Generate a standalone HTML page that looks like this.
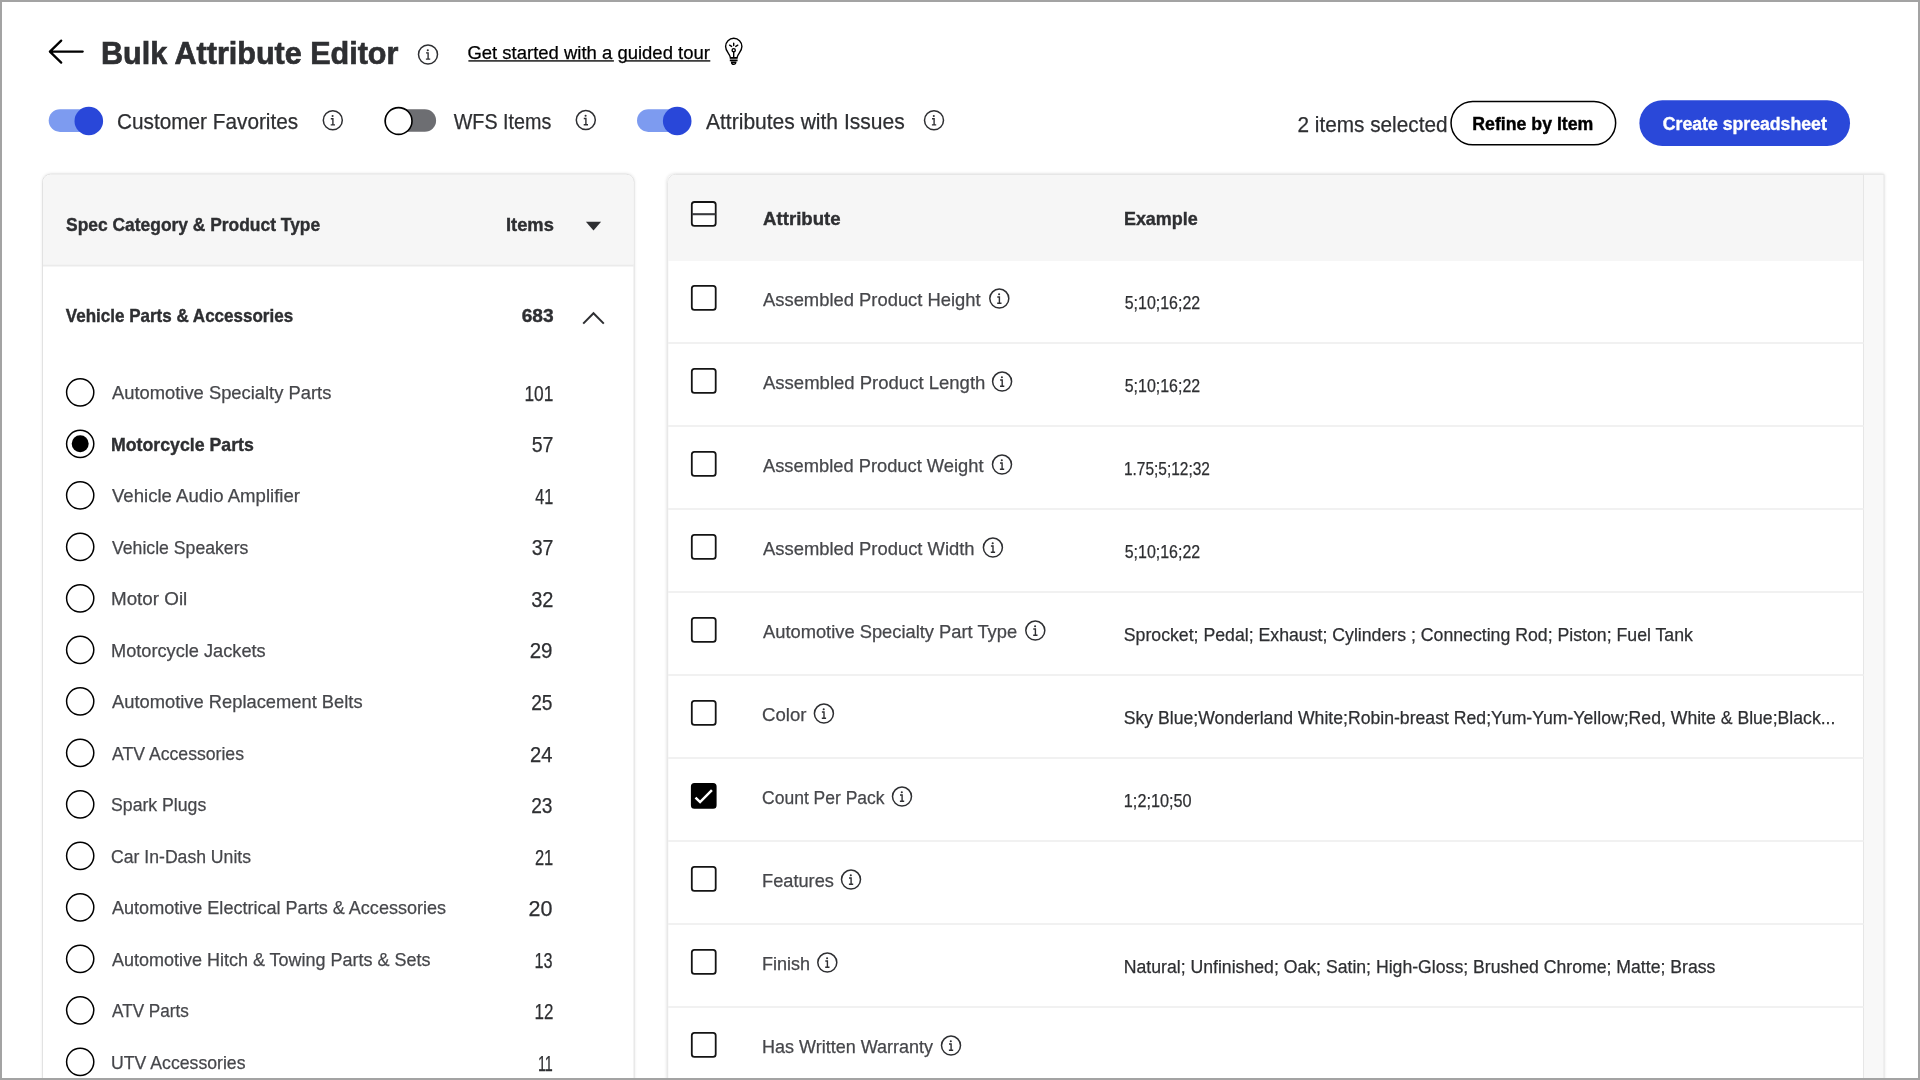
<!DOCTYPE html>
<html><head><meta charset="utf-8"><title>Bulk Attribute Editor</title>
<style>
html,body{margin:0;padding:0;background:#fff;overflow:hidden}
.page{position:relative;width:1920px;height:1080px;overflow:hidden;background:#fff}
svg{position:absolute;left:0;top:0;display:block;will-change:transform;font-family:"Liberation Sans",sans-serif}
.sh{position:absolute;height:1000px;border-radius:8px;box-shadow:0 0 3.5px rgba(0,0,0,.16)}
.frame{position:absolute;left:0;top:0;width:1920px;height:1080px;box-sizing:border-box;border:2px solid #a3a3a3;pointer-events:none}
</style></head><body><div class="page">
<div class="sh" style="left:42.5px;top:174.2px;width:591.6px"></div>
<div class="sh" style="left:667.2px;top:173.9px;width:1217.1px;border-radius:8px 0 0 8px"></div>
<svg width="1920" height="1080" viewBox="0 0 1920 1080">
<path d="M82.7 51.6H50M61.2 40.6L49.9 51.6L61.2 62.6" stroke="#000" stroke-width="2.3" fill="none" stroke-linecap="round" stroke-linejoin="round"/><g stroke="#2e2f32" fill="none" stroke-width="1.5"><circle cx="428.00" cy="54.50" r="9.5"/><path d="M426.00 52.90H428.10V59.10M425.90 59.10H430.20" stroke-width="1.4"/></g><circle cx="427.80" cy="50.20" r="1.05" fill="#2e2f32"/><rect x="468.4" y="60.1" width="145.5" height="1.6" fill="#2a2a2a"/><rect x="626.0" y="60.1" width="84.3" height="1.6" fill="#2a2a2a"/><g fill="none" stroke="#000" stroke-width="1.4"><path d="M730.4 57.6C730.1 53.8 725.6 51.6 725.6 46.4A8.15 8.15 0 0 1 741.9 46.4C741.9 51.6 737.4 53.8 737.1 57.6Z"/><circle cx="733.7" cy="50.2" r="1.6"/><path d="M733.7 51.8V57.6"/><path d="M733.7 43.3V45.6M729.6 45.2L731.6 46.4M737.8 45.2L735.8 46.4" stroke-linecap="round"/><path d="M729.8 58.9H737.6M729.8 60.6H737.6" stroke-width="1.2"/><path d="M731.6 62.2A2.1 2.1 0 1 0 735.8 62.2Z" stroke-width="1.4"/></g><rect x="48.7" y="109.3" width="52" height="22.6" rx="11.3" fill="#7d9bf0"/><circle cx="88.8" cy="121.0" r="14.3" fill="#2947d9"/><g stroke="#2e2f32" fill="none" stroke-width="1.5"><circle cx="332.80" cy="120.30" r="9.5"/><path d="M330.80 118.70H332.90V124.90M330.70 124.90H335.00" stroke-width="1.4"/></g><circle cx="332.60" cy="116.00" r="1.05" fill="#2e2f32"/><rect x="384.5" y="109.2" width="51.6" height="22.6" rx="11.3" fill="#6d6e72"/><circle cx="398.6" cy="121.0" r="13.4" fill="#fff" stroke="#000" stroke-width="1.6"/><g stroke="#2e2f32" fill="none" stroke-width="1.5"><circle cx="585.80" cy="120.10" r="9.5"/><path d="M583.80 118.50H585.90V124.70M583.70 124.70H588.00" stroke-width="1.4"/></g><circle cx="585.60" cy="115.80" r="1.05" fill="#2e2f32"/><rect x="637.0" y="109.3" width="52" height="22.6" rx="11.3" fill="#7d9bf0"/><circle cx="677.2" cy="121.0" r="14.3" fill="#2947d9"/><g stroke="#2e2f32" fill="none" stroke-width="1.5"><circle cx="934.00" cy="120.30" r="9.5"/><path d="M932.00 118.70H934.10V124.90M931.90 124.90H936.20" stroke-width="1.4"/></g><circle cx="933.80" cy="116.00" r="1.05" fill="#2e2f32"/><rect x="1451.05" y="101.45" width="164.6" height="43.3" rx="21.65" fill="#fff" stroke="#000" stroke-width="1.5"/><rect x="1639.4" y="100.25" width="210.6" height="45.75" rx="22.9" fill="#2a48d9"/><g><rect x="42.5" y="174.2" width="591.6" height="1000" rx="8" fill="#fff" stroke="#e2e2e2" stroke-width="1"/><path d="M43 264.5V182.2A8 8 0 0 1 51 174.7H625.6A8 8 0 0 1 633.6 182.2V264.5Z" fill="#f6f6f6"/><rect x="43" y="264.5" width="590.6" height="2" fill="#ebebeb"/></g><path d="M585.9 221.7H601.1L593.5 230.6Z" fill="#2e2f32"/><path d="M583.2 323.6L593.5 313.2L603.8 323.6" stroke="#2e2f32" stroke-width="2" fill="none"/><circle cx="80.2" cy="392.30" r="13.6" fill="#fff" stroke="#000" stroke-width="1.5"/><circle cx="80.2" cy="443.80" r="13.6" fill="#fff" stroke="#000" stroke-width="1.5"/><circle cx="80.2" cy="443.80" r="8.5" fill="#000"/><circle cx="80.2" cy="495.30" r="13.6" fill="#fff" stroke="#000" stroke-width="1.5"/><circle cx="80.2" cy="546.80" r="13.6" fill="#fff" stroke="#000" stroke-width="1.5"/><circle cx="80.2" cy="598.30" r="13.6" fill="#fff" stroke="#000" stroke-width="1.5"/><circle cx="80.2" cy="649.80" r="13.6" fill="#fff" stroke="#000" stroke-width="1.5"/><circle cx="80.2" cy="701.30" r="13.6" fill="#fff" stroke="#000" stroke-width="1.5"/><circle cx="80.2" cy="752.80" r="13.6" fill="#fff" stroke="#000" stroke-width="1.5"/><circle cx="80.2" cy="804.30" r="13.6" fill="#fff" stroke="#000" stroke-width="1.5"/><circle cx="80.2" cy="855.80" r="13.6" fill="#fff" stroke="#000" stroke-width="1.5"/><circle cx="80.2" cy="907.30" r="13.6" fill="#fff" stroke="#000" stroke-width="1.5"/><circle cx="80.2" cy="958.80" r="13.6" fill="#fff" stroke="#000" stroke-width="1.5"/><circle cx="80.2" cy="1010.30" r="13.6" fill="#fff" stroke="#000" stroke-width="1.5"/><circle cx="80.2" cy="1061.80" r="13.6" fill="#fff" stroke="#000" stroke-width="1.5"/><g><path d="M667.7 1100V182.4A8 8 0 0 1 675.7 174.4H1883.8V1100Z" fill="#fff" stroke="#e3e3e3" stroke-width="1"/><path d="M668.2 261V182.4A7.5 7.5 0 0 1 675.7 174.9H1863.5V261Z" fill="#f6f6f6"/><rect x="1863.5" y="174.9" width="19.8" height="906" fill="#f8f8f8"/><rect x="1863" y="174.9" width="1" height="906" fill="#e6e6e6"/></g><rect x="691.80" y="202.00" width="23.9" height="23.9" rx="2.6" fill="#fff" stroke="#141414" stroke-width="1.8"/><path d="M691.90 214.20H715.60" stroke="#3a3b3f" stroke-width="2.1"/><rect x="668" y="342" width="1195.5" height="2" fill="#f1f1f1"/><rect x="691.80" y="285.90" width="23.9" height="23.9" rx="2.6" fill="#fff" stroke="#141414" stroke-width="1.8"/><rect x="668" y="425" width="1195.5" height="2" fill="#f1f1f1"/><rect x="691.80" y="368.90" width="23.9" height="23.9" rx="2.6" fill="#fff" stroke="#141414" stroke-width="1.8"/><rect x="668" y="508" width="1195.5" height="2" fill="#f1f1f1"/><rect x="691.80" y="451.90" width="23.9" height="23.9" rx="2.6" fill="#fff" stroke="#141414" stroke-width="1.8"/><rect x="668" y="591" width="1195.5" height="2" fill="#f1f1f1"/><rect x="691.80" y="534.90" width="23.9" height="23.9" rx="2.6" fill="#fff" stroke="#141414" stroke-width="1.8"/><rect x="668" y="674" width="1195.5" height="2" fill="#f1f1f1"/><rect x="691.80" y="617.90" width="23.9" height="23.9" rx="2.6" fill="#fff" stroke="#141414" stroke-width="1.8"/><rect x="668" y="757" width="1195.5" height="2" fill="#f1f1f1"/><rect x="691.80" y="700.90" width="23.9" height="23.9" rx="2.6" fill="#fff" stroke="#141414" stroke-width="1.8"/><rect x="668" y="840" width="1195.5" height="2" fill="#f1f1f1"/><rect x="691.80" y="783.90" width="23.9" height="23.9" rx="2.6" fill="#000" stroke="#000" stroke-width="1.8"/><path d="M695.50 797.60L700.10 802.10L711.90 790.10" stroke="#fff" stroke-width="2.5" fill="none"/><rect x="668" y="923" width="1195.5" height="2" fill="#f1f1f1"/><rect x="691.80" y="866.90" width="23.9" height="23.9" rx="2.6" fill="#fff" stroke="#141414" stroke-width="1.8"/><rect x="668" y="1006" width="1195.5" height="2" fill="#f1f1f1"/><rect x="691.80" y="949.90" width="23.9" height="23.9" rx="2.6" fill="#fff" stroke="#141414" stroke-width="1.8"/><rect x="668" y="1089" width="1195.5" height="2" fill="#f1f1f1"/><rect x="691.80" y="1032.90" width="23.9" height="23.9" rx="2.6" fill="#fff" stroke="#141414" stroke-width="1.8"/><g stroke="#2e2f32" fill="none" stroke-width="1.5"><circle cx="999.30" cy="298.60" r="9.5"/><path d="M997.30 297.00H999.40V303.20M997.20 303.20H1001.50" stroke-width="1.4"/></g><circle cx="999.10" cy="294.30" r="1.05" fill="#2e2f32"/><g stroke="#2e2f32" fill="none" stroke-width="1.5"><circle cx="1002.10" cy="381.60" r="9.5"/><path d="M1000.10 380.00H1002.20V386.20M1000.00 386.20H1004.30" stroke-width="1.4"/></g><circle cx="1001.90" cy="377.30" r="1.05" fill="#2e2f32"/><g stroke="#2e2f32" fill="none" stroke-width="1.5"><circle cx="1002.00" cy="464.60" r="9.5"/><path d="M1000.00 463.00H1002.10V469.20M999.90 469.20H1004.20" stroke-width="1.4"/></g><circle cx="1001.80" cy="460.30" r="1.05" fill="#2e2f32"/><g stroke="#2e2f32" fill="none" stroke-width="1.5"><circle cx="992.90" cy="547.60" r="9.5"/><path d="M990.90 546.00H993.00V552.20M990.80 552.20H995.10" stroke-width="1.4"/></g><circle cx="992.70" cy="543.30" r="1.05" fill="#2e2f32"/><g stroke="#2e2f32" fill="none" stroke-width="1.5"><circle cx="1035.30" cy="630.60" r="9.5"/><path d="M1033.30 629.00H1035.40V635.20M1033.20 635.20H1037.50" stroke-width="1.4"/></g><circle cx="1035.10" cy="626.30" r="1.05" fill="#2e2f32"/><g stroke="#2e2f32" fill="none" stroke-width="1.5"><circle cx="823.90" cy="713.60" r="9.5"/><path d="M821.90 712.00H824.00V718.20M821.80 718.20H826.10" stroke-width="1.4"/></g><circle cx="823.70" cy="709.30" r="1.05" fill="#2e2f32"/><g stroke="#2e2f32" fill="none" stroke-width="1.5"><circle cx="902.00" cy="796.60" r="9.5"/><path d="M900.00 795.00H902.10V801.20M899.90 801.20H904.20" stroke-width="1.4"/></g><circle cx="901.80" cy="792.30" r="1.05" fill="#2e2f32"/><g stroke="#2e2f32" fill="none" stroke-width="1.5"><circle cx="851.00" cy="879.60" r="9.5"/><path d="M849.00 878.00H851.10V884.20M848.90 884.20H853.20" stroke-width="1.4"/></g><circle cx="850.80" cy="875.30" r="1.05" fill="#2e2f32"/><g stroke="#2e2f32" fill="none" stroke-width="1.5"><circle cx="827.30" cy="962.60" r="9.5"/><path d="M825.30 961.00H827.40V967.20M825.20 967.20H829.50" stroke-width="1.4"/></g><circle cx="827.10" cy="958.30" r="1.05" fill="#2e2f32"/><g stroke="#2e2f32" fill="none" stroke-width="1.5"><circle cx="951.00" cy="1045.60" r="9.5"/><path d="M949.00 1044.00H951.10V1050.20M948.90 1050.20H953.20" stroke-width="1.4"/></g><circle cx="950.80" cy="1041.30" r="1.05" fill="#2e2f32"/>
<text x="101.05" y="64.25" font-size="31.977" font-weight="700" fill="#2e2f32" stroke="#2e2f32" stroke-width="0.7" textLength="297.27" lengthAdjust="spacingAndGlyphs">Bulk Attribute Editor</text>
<text x="467.42" y="59.00" font-size="18.896" font-weight="400" fill="#000" stroke="#000" stroke-width="0.25" textLength="242.51" lengthAdjust="spacingAndGlyphs">Get started with a guided tour</text>
<text x="117.05" y="129.20" font-size="21.803" font-weight="400" fill="#2e2f32" stroke="#2e2f32" stroke-width="0.25" textLength="181.12" lengthAdjust="spacingAndGlyphs">Customer Favorites</text>
<text x="453.75" y="128.90" font-size="21.803" font-weight="400" fill="#2e2f32" stroke="#2e2f32" stroke-width="0.25" textLength="97.56" lengthAdjust="spacingAndGlyphs">WFS Items</text>
<text x="706.00" y="129.00" font-size="21.803" font-weight="400" fill="#2e2f32" stroke="#2e2f32" stroke-width="0.25" textLength="198.65" lengthAdjust="spacingAndGlyphs">Attributes with Issues</text>
<text x="1297.53" y="131.80" font-size="21.367" font-weight="400" fill="#2e2f32" stroke="#2e2f32" stroke-width="0.25" textLength="150.01" lengthAdjust="spacingAndGlyphs">2 items selected</text>
<text x="1472.32" y="130.00" font-size="18.024" font-weight="700" fill="#000" stroke="#000" stroke-width="0.4" textLength="121.02" lengthAdjust="spacingAndGlyphs">Refine by Item</text>
<text x="1662.75" y="130.25" font-size="18.532" font-weight="700" fill="#fff" stroke="#fff" stroke-width="0.4" textLength="164.03" lengthAdjust="spacingAndGlyphs">Create spreadsheet</text>
<text x="66.10" y="230.60" font-size="18.896" font-weight="700" fill="#2e2f32" stroke="#2e2f32" stroke-width="0.4" textLength="254.06" lengthAdjust="spacingAndGlyphs">Spec Category &amp; Product Type</text>
<text x="506.01" y="230.80" font-size="18.605" font-weight="700" fill="#2e2f32" stroke="#2e2f32" stroke-width="0.4" textLength="47.85" lengthAdjust="spacingAndGlyphs">Items</text>
<text x="65.80" y="322.20" font-size="18.896" font-weight="700" fill="#2e2f32" stroke="#2e2f32" stroke-width="0.4" textLength="227.35" lengthAdjust="spacingAndGlyphs">Vehicle Parts &amp; Accessories</text>
<text x="521.70" y="322.00" font-size="18.169" font-weight="700" fill="#2e2f32" stroke="#2e2f32" stroke-width="0.4" textLength="31.91" lengthAdjust="spacingAndGlyphs">683</text>
<text x="112.00" y="399.20" font-size="18.896" font-weight="400" fill="#46474b" stroke="#46474b" stroke-width="0.25" textLength="219.35" lengthAdjust="spacingAndGlyphs">Automotive Specialty Parts</text>
<text x="524.39" y="400.70" font-size="21.512" font-weight="400" fill="#2e2f32" stroke="#2e2f32" stroke-width="0.25" textLength="28.91" lengthAdjust="spacingAndGlyphs">101</text>
<text x="111.06" y="450.72" font-size="18.896" font-weight="700" fill="#2e2f32" stroke="#2e2f32" stroke-width="0.4" textLength="142.74" lengthAdjust="spacingAndGlyphs">Motorcycle Parts</text>
<text x="531.69" y="452.25" font-size="21.512" font-weight="400" fill="#2e2f32" stroke="#2e2f32" stroke-width="0.25" textLength="21.75" lengthAdjust="spacingAndGlyphs">57</text>
<text x="112.00" y="502.24" font-size="18.896" font-weight="400" fill="#46474b" stroke="#46474b" stroke-width="0.25" textLength="187.97" lengthAdjust="spacingAndGlyphs">Vehicle Audio Amplifier</text>
<text x="535.20" y="503.80" font-size="21.512" font-weight="400" fill="#2e2f32" stroke="#2e2f32" stroke-width="0.25" textLength="18.10" lengthAdjust="spacingAndGlyphs">41</text>
<text x="112.00" y="553.76" font-size="18.896" font-weight="400" fill="#46474b" stroke="#46474b" stroke-width="0.25" textLength="136.37" lengthAdjust="spacingAndGlyphs">Vehicle Speakers</text>
<text x="531.69" y="555.35" font-size="21.512" font-weight="400" fill="#2e2f32" stroke="#2e2f32" stroke-width="0.25" textLength="21.75" lengthAdjust="spacingAndGlyphs">37</text>
<text x="111.00" y="605.28" font-size="18.896" font-weight="400" fill="#46474b" stroke="#46474b" stroke-width="0.25" textLength="76.26" lengthAdjust="spacingAndGlyphs">Motor Oil</text>
<text x="531.17" y="606.90" font-size="21.512" font-weight="400" fill="#2e2f32" stroke="#2e2f32" stroke-width="0.25" textLength="22.29" lengthAdjust="spacingAndGlyphs">32</text>
<text x="111.04" y="656.80" font-size="18.896" font-weight="400" fill="#46474b" stroke="#46474b" stroke-width="0.25" textLength="154.63" lengthAdjust="spacingAndGlyphs">Motorcycle Jackets</text>
<text x="529.64" y="658.45" font-size="21.512" font-weight="400" fill="#2e2f32" stroke="#2e2f32" stroke-width="0.25" textLength="22.88" lengthAdjust="spacingAndGlyphs">29</text>
<text x="112.00" y="708.32" font-size="18.896" font-weight="400" fill="#46474b" stroke="#46474b" stroke-width="0.25" textLength="250.59" lengthAdjust="spacingAndGlyphs">Automotive Replacement Belts</text>
<text x="531.21" y="710.00" font-size="21.512" font-weight="400" fill="#2e2f32" stroke="#2e2f32" stroke-width="0.25" textLength="21.32" lengthAdjust="spacingAndGlyphs">25</text>
<text x="112.00" y="759.84" font-size="18.896" font-weight="400" fill="#46474b" stroke="#46474b" stroke-width="0.25" textLength="132.00" lengthAdjust="spacingAndGlyphs">ATV Accessories</text>
<text x="530.06" y="761.55" font-size="21.512" font-weight="400" fill="#2e2f32" stroke="#2e2f32" stroke-width="0.25" textLength="22.47" lengthAdjust="spacingAndGlyphs">24</text>
<text x="111.06" y="811.36" font-size="18.896" font-weight="400" fill="#46474b" stroke="#46474b" stroke-width="0.25" textLength="95.23" lengthAdjust="spacingAndGlyphs">Spark Plugs</text>
<text x="531.21" y="813.10" font-size="21.512" font-weight="400" fill="#2e2f32" stroke="#2e2f32" stroke-width="0.25" textLength="21.32" lengthAdjust="spacingAndGlyphs">23</text>
<text x="111.07" y="862.88" font-size="18.896" font-weight="400" fill="#46474b" stroke="#46474b" stroke-width="0.25" textLength="139.93" lengthAdjust="spacingAndGlyphs">Car In-Dash Units</text>
<text x="534.93" y="864.65" font-size="21.512" font-weight="400" fill="#2e2f32" stroke="#2e2f32" stroke-width="0.25" textLength="18.38" lengthAdjust="spacingAndGlyphs">21</text>
<text x="112.00" y="914.40" font-size="18.896" font-weight="400" fill="#46474b" stroke="#46474b" stroke-width="0.25" textLength="334.11" lengthAdjust="spacingAndGlyphs">Automotive Electrical Parts &amp; Accessories</text>
<text x="528.60" y="916.20" font-size="21.512" font-weight="400" fill="#2e2f32" stroke="#2e2f32" stroke-width="0.25" textLength="23.92" lengthAdjust="spacingAndGlyphs">20</text>
<text x="112.00" y="965.92" font-size="18.896" font-weight="400" fill="#46474b" stroke="#46474b" stroke-width="0.25" textLength="318.50" lengthAdjust="spacingAndGlyphs">Automotive Hitch &amp; Towing Parts &amp; Sets</text>
<text x="534.50" y="967.75" font-size="21.512" font-weight="400" fill="#2e2f32" stroke="#2e2f32" stroke-width="0.25" textLength="18.05" lengthAdjust="spacingAndGlyphs">13</text>
<text x="112.00" y="1017.44" font-size="18.896" font-weight="400" fill="#46474b" stroke="#46474b" stroke-width="0.25" textLength="76.85" lengthAdjust="spacingAndGlyphs">ATV Parts</text>
<text x="534.46" y="1019.30" font-size="21.512" font-weight="400" fill="#2e2f32" stroke="#2e2f32" stroke-width="0.25" textLength="18.87" lengthAdjust="spacingAndGlyphs">12</text>
<text x="111.06" y="1068.96" font-size="18.896" font-weight="400" fill="#46474b" stroke="#46474b" stroke-width="0.25" textLength="134.46" lengthAdjust="spacingAndGlyphs">UTV Accessories</text>
<text x="537.93" y="1070.85" font-size="21.512" font-weight="400" fill="#2e2f32" stroke="#2e2f32" stroke-width="0.25" textLength="14.89" lengthAdjust="spacingAndGlyphs">11</text>
<text x="763.10" y="225.00" font-size="18.605" font-weight="700" fill="#2e2f32" stroke="#2e2f32" stroke-width="0.4" textLength="77.47" lengthAdjust="spacingAndGlyphs">Attribute</text>
<text x="1123.94" y="224.70" font-size="18.605" font-weight="700" fill="#2e2f32" stroke="#2e2f32" stroke-width="0.4" textLength="73.77" lengthAdjust="spacingAndGlyphs">Example</text>
<text x="763.00" y="305.70" font-size="18.896" font-weight="400" fill="#46474b" stroke="#46474b" stroke-width="0.25" textLength="217.68" lengthAdjust="spacingAndGlyphs">Assembled Product Height</text>
<text x="1124.70" y="308.60" font-size="18.896" font-weight="400" fill="#2e2f32" stroke="#2e2f32" stroke-width="0.25" textLength="75.49" lengthAdjust="spacingAndGlyphs">5;10;16;22</text>
<text x="763.00" y="388.70" font-size="18.896" font-weight="400" fill="#46474b" stroke="#46474b" stroke-width="0.25" textLength="222.33" lengthAdjust="spacingAndGlyphs">Assembled Product Length</text>
<text x="1124.70" y="391.60" font-size="18.896" font-weight="400" fill="#2e2f32" stroke="#2e2f32" stroke-width="0.25" textLength="75.49" lengthAdjust="spacingAndGlyphs">5;10;16;22</text>
<text x="763.00" y="471.70" font-size="18.896" font-weight="400" fill="#46474b" stroke="#46474b" stroke-width="0.25" textLength="220.53" lengthAdjust="spacingAndGlyphs">Assembled Product Weight</text>
<text x="1123.88" y="474.60" font-size="18.896" font-weight="400" fill="#2e2f32" stroke="#2e2f32" stroke-width="0.25" textLength="86.09" lengthAdjust="spacingAndGlyphs">1.75;5;12;32</text>
<text x="763.00" y="554.70" font-size="18.896" font-weight="400" fill="#46474b" stroke="#46474b" stroke-width="0.25" textLength="211.55" lengthAdjust="spacingAndGlyphs">Assembled Product Width</text>
<text x="1124.70" y="557.60" font-size="18.896" font-weight="400" fill="#2e2f32" stroke="#2e2f32" stroke-width="0.25" textLength="75.49" lengthAdjust="spacingAndGlyphs">5;10;16;22</text>
<text x="763.00" y="637.70" font-size="18.896" font-weight="400" fill="#46474b" stroke="#46474b" stroke-width="0.25" textLength="254.14" lengthAdjust="spacingAndGlyphs">Automotive Specialty Part Type</text>
<text x="1123.76" y="640.60" font-size="18.896" font-weight="400" fill="#2e2f32" stroke="#2e2f32" stroke-width="0.25" textLength="569.15" lengthAdjust="spacingAndGlyphs">Sprocket; Pedal; Exhaust; Cylinders ; Connecting Rod; Piston; Fuel Tank</text>
<text x="762.02" y="720.70" font-size="18.896" font-weight="400" fill="#46474b" stroke="#46474b" stroke-width="0.25" textLength="44.39" lengthAdjust="spacingAndGlyphs">Color</text>
<text x="1123.77" y="723.60" font-size="18.896" font-weight="400" fill="#2e2f32" stroke="#2e2f32" stroke-width="0.25" textLength="711.65" lengthAdjust="spacingAndGlyphs">Sky Blue;Wonderland White;Robin-breast Red;Yum-Yum-Yellow;Red, White &amp; Blue;Black...</text>
<text x="762.07" y="803.70" font-size="18.896" font-weight="400" fill="#46474b" stroke="#46474b" stroke-width="0.25" textLength="122.51" lengthAdjust="spacingAndGlyphs">Count Per Pack</text>
<text x="1123.84" y="806.60" font-size="18.896" font-weight="400" fill="#2e2f32" stroke="#2e2f32" stroke-width="0.25" textLength="67.82" lengthAdjust="spacingAndGlyphs">1;2;10;50</text>
<text x="762.04" y="886.70" font-size="18.896" font-weight="400" fill="#46474b" stroke="#46474b" stroke-width="0.25" textLength="71.85" lengthAdjust="spacingAndGlyphs">Features</text>
<text x="762.04" y="969.70" font-size="18.896" font-weight="400" fill="#46474b" stroke="#46474b" stroke-width="0.25" textLength="48.10" lengthAdjust="spacingAndGlyphs">Finish</text>
<text x="1123.76" y="972.60" font-size="18.896" font-weight="400" fill="#2e2f32" stroke="#2e2f32" stroke-width="0.25" textLength="591.64" lengthAdjust="spacingAndGlyphs">Natural; Unfinished; Oak; Satin; High-Gloss; Brushed Chrome; Matte; Brass</text>
<text x="762.05" y="1052.70" font-size="18.896" font-weight="400" fill="#46474b" stroke="#46474b" stroke-width="0.25" textLength="171.04" lengthAdjust="spacingAndGlyphs">Has Written Warranty</text>
</svg>
<div class="frame"></div>
</div></body></html>
